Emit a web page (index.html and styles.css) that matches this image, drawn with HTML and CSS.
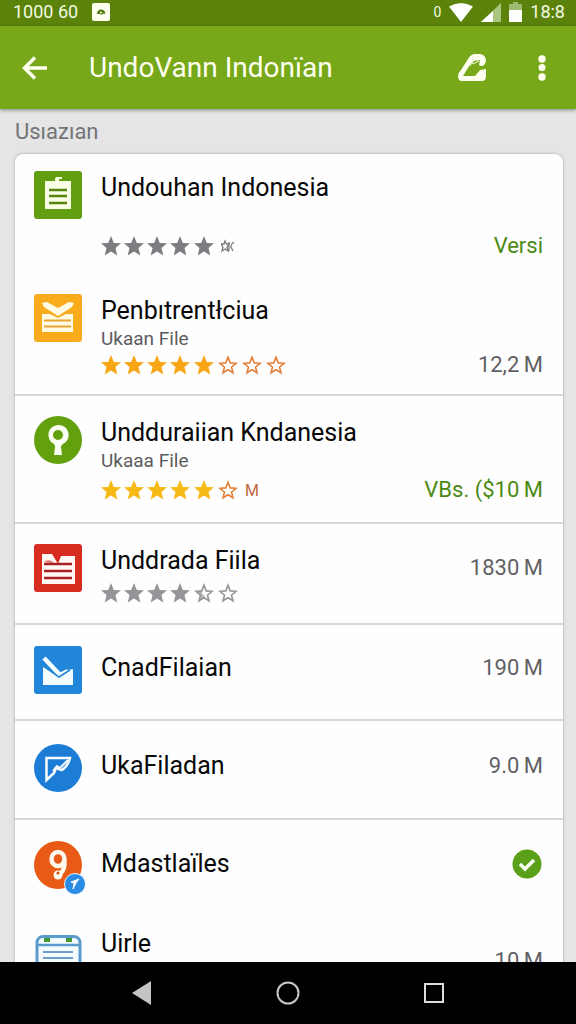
FILE: index.html
```html
<!DOCTYPE html>
<html lang="id">
<head>
<meta charset="utf-8">
<meta name="viewport" content="width=device-width, initial-scale=1">
<title>UndoVann Indonïan</title>
<link rel="stylesheet" href="styles.css">
</head>
<body>
<svg class="defs" aria-hidden="true">
  <symbol id="star" viewBox="0 0 20 20"><path d="M10 0 12.800 6.900 20 7.300 14.500 12.100 16.300 19.400 10 15.500 3.700 19.400 5.500 12.100 0 7.300 7.200 6.900Z" fill="currentColor"/></symbol>
  <symbol id="star-open" viewBox="0 0 20 20"><path d="M10 2.2 12.2 7.9 18 8.3 13.5 12.2 15 17.8 10 14.7 5 17.8 6.5 12.2 2 8.3 7.8 7.9Z" fill="none" stroke="currentColor" stroke-width="1.6"/></symbol>
  <symbol id="star-half" viewBox="0 0 20 20"><path d="M10 2.2 12.2 7.9 18 8.3 13.5 12.2 15 17.8 10 14.7 5 17.8 6.5 12.2 2 8.3 7.8 7.9Z" fill="none" stroke="currentColor" stroke-width="1.6"/><path d="M2 8 8 8 8 11 11 13 5 18 6 12Z" fill="currentColor" opacity=".7"/></symbol>
</svg>

<div class="status">
  <span>1000 60</span>
  <svg class="status-app" viewBox="0 0 18 18" width="18" height="18"><rect width="18" height="18" rx="2" fill="#fffff0"/><path d="M5 11C5 7.500 7.500 6 10 6.500S13.500 9 13 11L11 10.500 10 12 8 11Z" fill="#527b10"/><circle cx="9" cy="9.500" r="1" fill="#fffff0"/></svg>
  <span class="status-mark">0</span>
  <svg viewBox="0 0 24 19" width="24" height="19"><path d="M0 3.500Q12-3.500 24 3.500L12 19Z" fill="#fff"/></svg>
  <svg viewBox="0 0 20 19" width="20" height="19"><path d="M20 0V19H0Z" fill="#a9c67e"/><path d="M12 8V19H0Z" fill="#fff"/></svg>
  <svg class="battery" viewBox="0 0 13 20" width="13" height="20"><path d="M4 0H9V2H13V9H0V2H4Z" fill="#9dbb70"/><path d="M0 8H13V20H0Z" fill="#fff"/></svg>
  <span>18:8</span>
</div>

<header class="appbar">
  <button class="icon-btn" aria-label="Kembali"><svg viewBox="0 0 26 26" width="26" height="26"><path d="M13 2.500 2.500 13 13 23.500M3 13H25" fill="none" stroke="#fffff0" stroke-width="3.500"/></svg></button>
  <h1>UndoVann Indonïan</h1>
  <button class="icon-btn" aria-label="Edit"><svg viewBox="0 0 30 30" width="30" height="30"><path d="M17 1H23Q29 2 29 8 28 13 24 13L22 12 23 7 17 8 14 10 6 23H18L23 17 29 16V23Q29 28 25 28H5Q1 28 1 23 1 20 4 17L11 6Q13 2 17 1Z" fill="#fffff0"/><path d="M13 13 15 9 16 11 22 8" fill="none" stroke="#fffff0" stroke-width="1"/></svg></button>
  <button class="icon-btn" aria-label="Menu lainnya"><svg viewBox="0 0 8 26" width="8" height="26"><g fill="#fffff0"><circle cx="4" cy="4" r="3.700"/><circle cx="4" cy="12.500" r="3.500"/><circle cx="4" cy="22" r="3.700"/></g></svg></button>
</header>

<main class="content">
  <p class="section">Usıazıan</p>
  <div class="card">
    <article class="row lead">
      <svg class="icon" viewBox="0 0 48 48"><rect width="48" height="48" rx="3" fill="#629f10"/><path d="M11 10H21V8Q21 6 23 6H28V10H37V38H11Z" fill="#f8ffe5"/><path d="M25 9H29" stroke="#629f10" stroke-width="2"/><path d="M15 19H33M15 25H33M15 32H33" stroke="#56840f" stroke-width="2.500"/></svg>
      <div class="body">
        <h2>Undouhan Indonesia</h2>
        <div class="meta">
          <div class="stars gray dark" role="img" aria-label="Peringkat 5"><svg><use href="#star"/></svg><svg><use href="#star"/></svg><svg><use href="#star"/></svg><svg><use href="#star"/></svg><svg class="wide"><use href="#star"/></svg><svg class="mini" viewBox="0 0 14 14"><path d="M0 5H3L4 2 5.500 5H8L6 8 7 12 4 10 1 12 2 8ZM8 3V12M13 3Q10 5 10 8L12 12" fill="none" stroke="currentColor" stroke-width="1.300"/></svg></div>
          <span class="value green">Versi</span>
        </div>
      </div>
    </article>

    <article class="row second">
      <svg class="icon" viewBox="0 0 48 48"><rect width="48" height="48" rx="3" fill="#f8ab1b"/><path d="M8 9 13 8 24 14 35 8 40 9 38 13 24 22 10 13Z" fill="#fffbe5"/><path d="M8 20H16L24 24 32 20H39V38H8Z" fill="#fffbe5"/><path d="M10 26.500H37M10 32.500H37" stroke="#e8a435" stroke-width="2"/></svg>
      <div class="body">
        <h2>Penbıtrentłciua</h2>
        <p class="sub">Ukaan File</p>
        <div class="meta">
          <div class="stars amber" role="img" aria-label="Peringkat 5 dari 8"><svg><use href="#star"/></svg><svg><use href="#star"/></svg><svg><use href="#star"/></svg><svg><use href="#star"/></svg><svg class="wide"><use href="#star"/></svg><svg class="open"><use href="#star-open"/></svg><svg class="open"><use href="#star-open"/></svg><svg class="open"><use href="#star-open"/></svg></div>
          <span class="value">12,2&thinsp;M</span>
        </div>
      </div>
    </article>

    <article class="row ruled third">
      <svg class="icon" viewBox="0 0 48 48"><circle cx="24" cy="24" r="24" fill="#62a10d"/><path fill-rule="evenodd" d="M24 9A10 10 0 0 0 20 28Q21 29 21 31L20 39H28L27 31Q27 29 29 28A10 10 0 0 0 24 9ZM24 14A5 5 0 1 1 24 24A5 5 0 1 1 24 14Z" fill="#fbfff3"/></svg>
      <div class="body">
        <h2>Undduraiian Kndanesia</h2>
        <p class="sub">Ukaaa File</p>
        <div class="meta">
          <div class="stars yellow" role="img" aria-label="Peringkat 5 dari 6"><svg><use href="#star"/></svg><svg><use href="#star"/></svg><svg><use href="#star"/></svg><svg><use href="#star"/></svg><svg class="wide"><use href="#star"/></svg><svg class="open"><use href="#star-open"/></svg><span class="tag">M</span></div>
          <span class="value green">VBs. ($10&thinsp;M</span>
        </div>
      </div>
    </article>

    <article class="row ruled fourth">
      <svg class="icon" viewBox="0 0 48 48"><rect width="48" height="48" rx="3" fill="#d72d20"/><path d="M8 10H18L24 20 27 12H41V40H8Z" fill="#fff8f5"/><path d="M10 18Q15 14 20 19Z" fill="#ec6b62"/><path d="M10 20H38M10 27H38M10 34H38" stroke="#a82027" stroke-width="2.500"/></svg>
      <div class="body">
        <h2>Unddrada Fiila</h2>
        <div class="stars gray" role="img" aria-label="Peringkat 4,5 dari 6"><svg><use href="#star"/></svg><svg><use href="#star"/></svg><svg><use href="#star"/></svg><svg><use href="#star"/></svg><svg class="wide"><use href="#star-half"/></svg><svg class="open"><use href="#star-open"/></svg></div>
      </div>
      <span class="value">1830&thinsp;M</span>
    </article>

    <article class="row ruled fifth">
      <svg class="icon" viewBox="0 0 48 48"><rect width="48" height="48" rx="3" fill="#2186d9"/><path d="M9 21 24 31 34 24 39 23V39H9Z" fill="#f4fcff"/><path d="M10 12 26 29 34 25" fill="none" stroke="#f4fcff" stroke-width="4.500"/><path d="M18 26 25 31 36 24" fill="none" stroke="#2186d9" stroke-width="1.500"/></svg>
      <div class="body"><h2>CnadFilaian</h2></div>
      <span class="value">190&thinsp;M</span>
    </article>

    <article class="row ruled sixth">
      <svg class="icon" viewBox="0 0 48 48"><circle cx="24" cy="24" r="24" fill="#1d7dd6"/><path d="M12.500 14H36Q34 22 28 26L22 24 20 29 12.500 36Z" fill="none" stroke="#f4fcff" stroke-width="2.500"/><path d="M19 27 23 22 26 24 34 16" fill="none" stroke="#f4fcff" stroke-width="2"/></svg>
      <div class="body"><h2>UkaFiladan</h2></div>
      <span class="value">9.0&thinsp;M</span>
    </article>

    <article class="row ruled seventh">
      <div class="icon-wrap">
        <svg class="icon" viewBox="0 0 48 48"><circle cx="24" cy="24" r="24" fill="#e85a15"/><ellipse cx="24" cy="18" rx="6.500" ry="7" fill="none" stroke="#fff8ed" stroke-width="4.500"/><path d="M30 18Q32 28 26 33" fill="none" stroke="#fff8ed" stroke-width="4.500"/><circle cx="24" cy="34" r="4.500" fill="#fff8ed"/><circle cx="24" cy="32" r="1.500" fill="#c5521b"/></svg>
        <svg class="badge" viewBox="0 0 22 22"><circle cx="11" cy="11" r="10.500" fill="#2b8ce6" stroke="#e7f5ff" stroke-width="1"/><path d="M7 9 15 6 12 10 9 16 10 10Z" fill="#fff" stroke="#fff" stroke-width="1"/></svg>
      </div>
      <div class="body"><h2>Mdastlaïles</h2></div>
      <svg class="check" viewBox="0 0 30 30" role="img" aria-label="Selesai"><circle cx="15" cy="15" r="14.500" fill="#5aa018"/><path d="M8 15 13 20 22 11" fill="none" stroke="#fbfff3" stroke-width="3.500"/></svg>
    </article>

    <article class="row last">
      <svg class="icon" viewBox="0 0 48 48"><rect x="3" y="1.500" width="43" height="46" rx="6" fill="#f4fbff" stroke="#5a9bcb" stroke-width="3"/><path d="M3 10H46" stroke="#5a9bcb" stroke-width="2.500"/><path d="M10 3H16V7H10ZM32 3H38V7H32Z" fill="#3f9a35"/><path d="M9 17H39M9 23H39M9 29H39" stroke="#6f9fc9" stroke-width="2"/></svg>
      <div class="body"><h2>Uirle</h2></div>
      <span class="value">10&thinsp;M</span>
    </article>
  </div>
</main>

<nav class="navbar">
  <button aria-label="Kembali ke layar sebelumnya"><svg viewBox="0 0 26 26" width="26" height="26"><path d="M3 13 22 1V25Z" fill="#c4c4c4"/></svg></button>
  <button aria-label="Layar utama"><svg viewBox="0 0 26 26" width="26" height="26"><circle cx="13" cy="13" r="10.500" fill="none" stroke="#c8c8c8" stroke-width="2"/></svg></button>
  <button aria-label="Aplikasi terbaru"><svg viewBox="0 0 26 26" width="26" height="26"><rect x="4" y="4" width="18" height="18" fill="none" stroke="#dcdcdc" stroke-width="2"/></svg></button>
</nav>
</body>
</html>
```
FILE: styles.css
```css
* { box-sizing: border-box; }

body {
  margin: 0;
  height: 100vh;
  display: flex;
  flex-direction: column;
  overflow: hidden;
  background: #e5e5e6;
  font-family: Roboto, "Liberation Sans", sans-serif;
  color: #080808;
}

h1, h2, p { margin: 0; font-weight: 400; }
svg { display: block; flex: none; }
.defs { position: absolute; width: 0; height: 0; }

button {
  display: flex;
  align-items: center;
  justify-content: center;
  padding: 0;
  border: 0;
  background: none;
}

.status {
  flex: none;
  display: flex;
  align-items: center;
  gap: 8px;
  height: 26px;
  padding: 0 11px 2px 13px;
  background: #5b830b;
  color: #f4fae0;
  font-size: 18px;
  line-height: 24px;
}
.status-app { margin-left: 6px; }
.status-mark { margin-left: auto; font-size: 14px; }

.appbar {
  position: relative;
  flex: none;
  display: flex;
  align-items: center;
  height: 83px;
  padding: 0 14px 0 15px;
  background: #76a819;
  box-shadow: 0 1px 4px #0000006b;
  color: #fffff0;
}
.appbar h1 {
  flex: 1;
  padding-left: 34px;
  font-size: 28px;
  line-height: 36px;
  white-space: nowrap;
}
.icon-btn { width: 40px; height: 48px; }
.icon-btn + .icon-btn { margin-left: 30px; }

.content {
  flex: 1;
  min-height: 0;
  overflow: hidden;
  padding: 8px 13px 0 15px;
}
.section {
  height: 37px;
  font-size: 22px;
  line-height: 30px;
  color: #737477;
}

.card {
  min-height: 100%;
  border-radius: 8px;
  background: #fefefe;
  box-shadow: 0 0 3px #0000004d;
}
.row {
  display: flex;
  align-items: flex-start;
  gap: 19px;
  padding: 18px 20px 0 19px;
}
.ruled { border-top: 2px solid #d4d7db; }
.lead { height: 122px; padding-top: 17px; }
.second { height: 118px; }
.third { height: 128px; padding-top: 20px; }
.fourth { height: 101px; padding-top: 20px; }
.fifth { height: 96px; padding-top: 21px; }
.sixth { height: 99px; padding-top: 23px; }
.seventh { height: 99px; padding-top: 21px; }
.last { height: 100px; }

.icon { width: 48px; height: 48px; }
.icon-wrap { position: relative; flex: none; }
.badge {
  position: absolute;
  right: -4px;
  bottom: -6px;
  width: 22px;
  height: 22px;
}

.body { flex: 1; min-width: 0; }
.row h2 {
  font-size: 25px;
  line-height: 34px;
  white-space: nowrap;
}
.fifth h2, .sixth h2 { line-height: 44px; }
.seventh h2 { line-height: 46px; }
.last h2 { line-height: 18px; }

.sub {
  font-size: 19px;
  line-height: 22px;
  color: #5c5c5f;
}
.meta {
  display: flex;
  align-items: center;
  justify-content: space-between;
  height: 30px;
}
.third .meta { height: 36px; }
.lead .meta { margin-top: 26px; }

.stars { display: flex; align-items: center; gap: 3px; }
.stars svg { width: 20px; height: 20px; }
.stars .wide, .stars .open { margin-left: 1px; }
.stars .open { color: #e2813a; }
.stars .mini { width: 14px; height: 14px; margin-left: 4px; }
.amber { color: #f7a616; }
.yellow { color: #f7b914; }
.gray, .stars.gray .open { color: #939598; }
.stars.dark { color: #7c7d80; }
.fourth .stars { height: 30px; }
.tag { margin-left: 4px; font-size: 16px; color: #c0693f; }

.value {
  font-size: 22px;
  line-height: 28px;
  color: #616164;
  white-space: nowrap;
}
.green { color: #4b8a12; }
.fourth .value { padding-top: 10px; }
.fifth .value, .sixth .value { line-height: 44px; }
.last .value { padding-top: 12px; }

.check { width: 30px; height: 30px; margin: 8px 1px 0 0; }

.navbar {
  flex: none;
  display: flex;
  align-items: center;
  justify-content: center;
  gap: 98px;
  height: 62px;
  background: #000;
}
.navbar button { width: 48px; height: 48px; }
```
